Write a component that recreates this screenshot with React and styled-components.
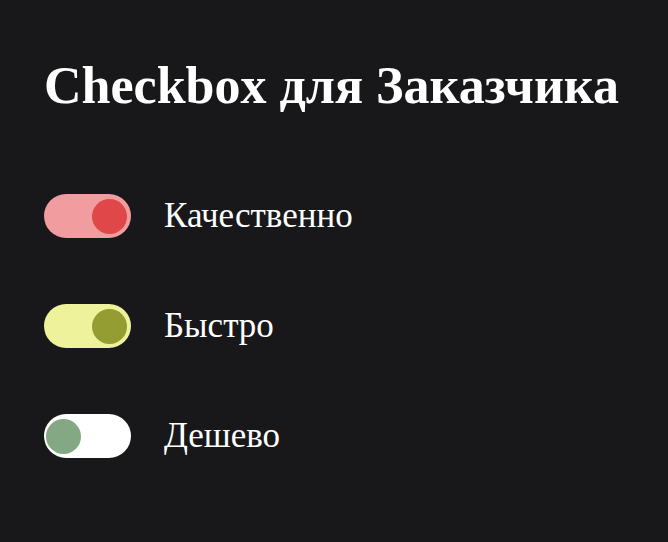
import React, { useState } from 'react';
import styled, { createGlobalStyle } from 'styled-components';

const GlobalStyle = createGlobalStyle`
  html, body {
    margin: 0;
    background: #18181a;
  }
  body {
    font-family: "Liberation Serif", "Times New Roman", serif;
    color: #ffffff;
  }
`;

const Page = styled.div`
  min-height: 542px;
  box-sizing: border-box;
  padding: 56px 44px 0;
  background: #18181a;
`;

const Title = styled.h1`
  margin: 0 0 78px;
  font-size: 52px;
  font-weight: bold;
  line-height: 60px;
  white-space: nowrap;
`;

const List = styled.div`
  display: flex;
  flex-direction: column;
  gap: 66px;
`;

const Row = styled.label`
  display: flex;
  align-items: center;
  gap: 33px;
  cursor: pointer;
`;

const Track = styled.span`
  position: relative;
  display: block;
  flex: none;
  width: 87px;
  height: 44px;
  border-radius: 22px;
  background: ${(p) => (p.$on ? p.$track : '#ffffff')};
  transition: background 0.2s;
`;

const Knob = styled.span`
  position: absolute;
  top: 5px;
  left: ${(p) => (p.$on ? '48px' : '2px')};
  width: 35px;
  height: 35px;
  border-radius: 50%;
  background: ${(p) => p.$color};
  transition: left 0.2s;
`;

const Label = styled.span`
  font-size: 35px;
  line-height: 44px;
`;

const options = [
  { id: 'quality', label: 'Качественно', track: '#f19c9e', knob: '#e04749', on: true },
  { id: 'fast', label: 'Быстро', track: '#eef29b', knob: '#949d31', on: true },
  { id: 'cheap', label: 'Дешево', track: '#eef29b', knob: '#84a883', on: false },
];

const Toggle = ({ item }) => {
  const [on, setOn] = useState(item.on);
  return (
    <Row onClick={() => setOn(!on)}>
      <Track $on={on} $track={item.track}>
        <Knob $on={on} $color={item.knob} />
      </Track>
      <Label>{item.label}</Label>
    </Row>
  );
};

export default function App() {
  return (
    <>
      <GlobalStyle />
      <Page>
        <Title>Checkbox для Заказчика</Title>
        <List>
          {options.map((item) => (
            <Toggle key={item.id} item={item} />
          ))}
        </List>
      </Page>
    </>
  );
}
